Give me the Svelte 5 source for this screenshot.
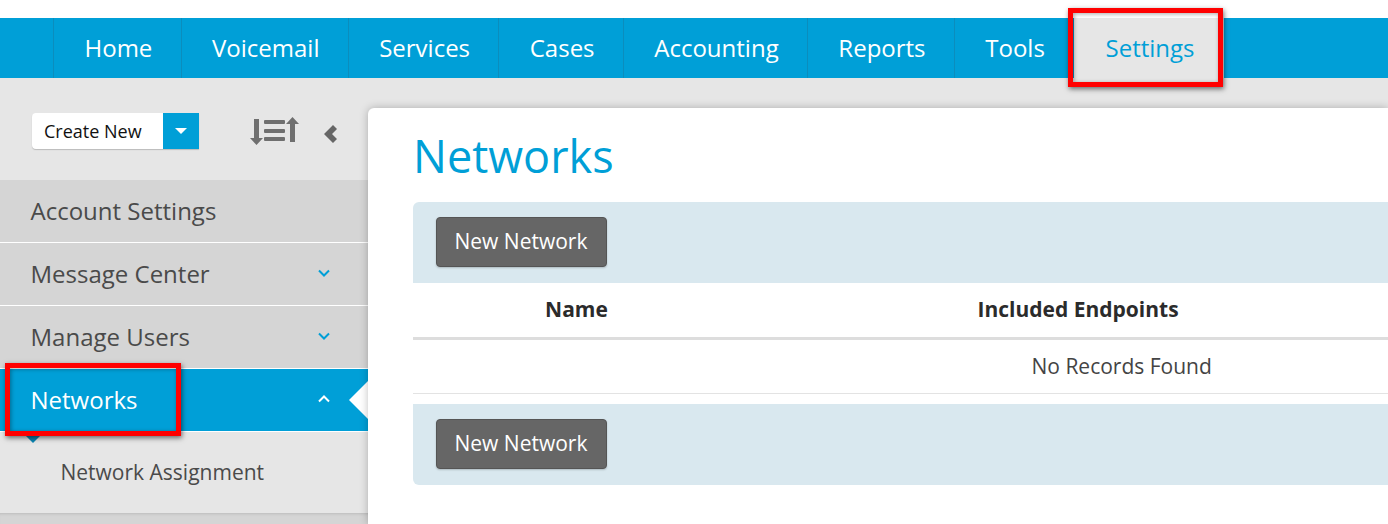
<script>
  const tabs = ["Home", "Voicemail", "Services", "Cases", "Accounting", "Reports", "Tools", "Settings"];
  const menu = [
    { label: "Account Settings" },
    { label: "Message Center", arrow: "down" },
    { label: "Manage Users", arrow: "down" },
    { label: "Networks", arrow: "up", active: true }
  ];
</script>

<div class="page">
  <nav class="topnav">
    {#each tabs as tab}
      <a class="tab" class:current={tab === "Settings"} href="#top">{tab}</a>
    {/each}
  </nav>

  <div class="body">
    <aside class="sidebar">
      <div class="tools">
        <div class="create">
          <span class="create-label">Create New</span>
          <span class="create-caret"><i></i></span>
        </div>
        <svg class="sort" width="49" height="28" viewBox="0 0 49 28" fill="#6f6f6f">
          <path d="M4 2h5v19h4l-6.500 7-6.500-7h4z" />
          <rect x="14" y="3" width="21" height="4" rx="1" />
          <rect x="14" y="12" width="21" height="4" rx="1" />
          <rect x="14" y="20" width="21" height="4" rx="1" />
          <path d="M36 7l6.500-7 6.500 7h-4v18h-5V7z" />
        </svg>
        <svg class="collapse" width="13" height="18" viewBox="0 0 13 18" fill="#666">
          <path d="M9 0l4 4-5 5 5 5-4 4-9-9z" />
        </svg>
      </div>

      {#each menu as item}
        <div class="item" class:active={item.active}>
          <span class="item-label">{item.label}</span>
          {#if item.arrow}
            <svg class="chev" width="12" height="8" viewBox="0 0 12 8" fill="none" stroke-width="2">
              {#if item.arrow === "down"}
                <path d="M1 1.500l5 5 5-5" />
              {:else}
                <path d="M1 6.500l5-5 5 5" />
              {/if}
            </svg>
          {/if}
          {#if item.active}
            <i class="notch"></i>
            <i class="drop"></i>
          {/if}
        </div>
      {/each}

      <div class="sub">Network Assignment</div>
      <div class="rest"></div>
    </aside>

    <main class="card">
      <h1>Networks</h1>
      <div class="panel">
        <div class="bar top"><button>New Network</button></div>
        <div class="thead">
          <div class="col-name">Name</div>
          <div class="col-end">Included Endpoints</div>
        </div>
        <div class="empty">No Records Found</div>
        <div class="bar bottom"><button>New Network</button></div>
      </div>
    </main>
  </div>

  <div class="mark mark-settings"></div>
  <div class="mark mark-networks"></div>
</div>

<style>
  :global(body) {
    margin: 0;
    background: #fff;
    overflow: hidden;
  }

  .page {
    position: relative;
    width: 1388px;
    height: 524px;
    overflow: hidden;
    padding-top: 18px;
    box-sizing: border-box;
    font-family: "Open Sans", sans-serif;
    background: #e6e6e6;
    box-shadow: inset 0 18px 0 #fff;
  }

  .topnav {
    display: flex;
    height: 60px;
    padding-left: 53px;
    background: #009fd7;
  }

  .tab {
    display: flex;
    align-items: center;
    padding: 0 29.200px 2px 30.500px;
    box-sizing: border-box;
    margin-right: -1px;
    border-left: 1px solid #0b8dbd;
    color: #fff;
    font-size: 24px;
    text-decoration: none;
  }

  .tab.current {
    padding-left: 31.500px;
    background: #e6e6e6;
    color: #009fd7;
  }

  .body {
    display: flex;
    height: 446px;
  }

  .sidebar {
    width: 368px;
    flex: none;
  }

  .tools {
    display: flex;
    align-items: center;
    height: 102px;
    padding-left: 32px;
    box-sizing: border-box;
  }

  .create {
    display: flex;
    width: 167px;
    height: 36px;
    margin-top: 3px;
    background: #fff;
    border-radius: 4px 0 0 4px;
    box-shadow: 0 1px 1px #bbb;
  }

  .create-label {
    flex: 1;
    padding-left: 12px;
    font-size: 18px;
    line-height: 37px;
    color: #111;
  }

  .create-caret {
    display: flex;
    align-items: center;
    justify-content: center;
    width: 36px;
    background: #009fd7;
  }

  .create-caret i {
    border-left: 6px solid transparent;
    border-right: 6px solid transparent;
    border-top: 6px solid #fff;
  }

  .sort {
    margin: 4px 0 0 51px;
  }

  .collapse {
    margin: 10px 0 0 25px;
  }

  .item {
    position: relative;
    display: flex;
    align-items: center;
    justify-content: space-between;
    height: 63px;
    padding: 0 38px 0 30.500px;
    box-sizing: border-box;
    background: #d5d5d5;
    border-bottom: 1px solid #fff;
    color: #4a4a4a;
    font-size: 24px;
  }

  .item-label {
    margin-top: -2px;
  }

  .chev {
    stroke: #009fd7;
    margin-top: -2px;
  }

  .item.active {
    background: #009fd7;
    color: #fff;
  }

  .item.active .chev {
    stroke: #fff;
  }

  .notch {
    position: absolute;
    right: 0;
    top: 12px;
    border-top: 19px solid transparent;
    border-bottom: 19px solid transparent;
    border-right: 19px solid #fff;
  }

  .drop {
    position: absolute;
    left: 25px;
    bottom: -12px;
    border-left: 8px solid transparent;
    border-right: 8px solid transparent;
    border-top: 8px solid #0b86b3;
  }

  .sub {
    height: 81px;
    padding: 25px 0 0 60.500px;
    box-sizing: border-box;
    font-size: 21px;
    line-height: 30px;
    color: #4a4a4a;
  }

  .rest {
    height: 30px;
    background: #d5d5d5;
    box-shadow: inset 0 3px 3px -2px #bbb;
  }

  .card {
    position: relative;
    flex: 1;
    margin-top: 30px;
    padding: 15px 0 0 45px;
    background: #fff;
    border-top-left-radius: 6px;
    box-shadow: 0 0 8px rgba(0, 0, 0, 0.25);
  }

  h1 {
    margin: 0 0 14px;
    color: #009fd7;
    font-size: 45px;
    font-weight: 400;
    line-height: 65px;
  }

  .panel {
    width: 975px;
  }

  .bar {
    height: 81px;
    padding: 15px 23px 16px;
    box-sizing: border-box;
    background: #d9e8ef;
  }

  .bar.top {
    border-radius: 6px 0 0 0;
  }

  .bar.bottom {
    margin-top: 10px;
    border-radius: 0 0 0 6px;
  }

  button {
    display: block;
    width: 171px;
    height: 50px;
    padding: 0 1px 2px 0;
    background: #666;
    border: 1px solid #555;
    border-radius: 4px;
    box-shadow: 0 1px 2px rgba(0, 0, 0, 0.2);
    color: #fff;
    font-family: inherit;
    font-size: 21px;
  }

  .thead {
    display: flex;
    align-items: center;
    height: 57px;
    padding-bottom: 3px;
    border-bottom: 3px solid #ddd;
    box-sizing: border-box;
    color: #2b2b2b;
    font-size: 21px;
    font-weight: 700;
  }

  .col-name {
    width: 327px;
    text-align: center;
  }

  .col-end {
    margin-left: 237.500px;
  }

  .empty {
    height: 54px;
    padding-left: 618.500px;
    border-bottom: 1px solid #e3e3e3;
    box-sizing: border-box;
    color: #444;
    font-size: 21px;
    line-height: 52px;
  }

  .mark {
    position: absolute;
    border: 5px solid #f00;
    box-shadow: 1px 2px 5px rgba(0, 0, 0, 0.55), inset 1px 1px 4px rgba(0, 0, 0, 0.35);
    box-sizing: border-box;
  }

  .mark-settings {
    left: 1068px;
    top: 8px;
    width: 155px;
    height: 79px;
  }

  .mark-networks {
    left: 5px;
    top: 363px;
    width: 176px;
    height: 73px;
  }
</style>
